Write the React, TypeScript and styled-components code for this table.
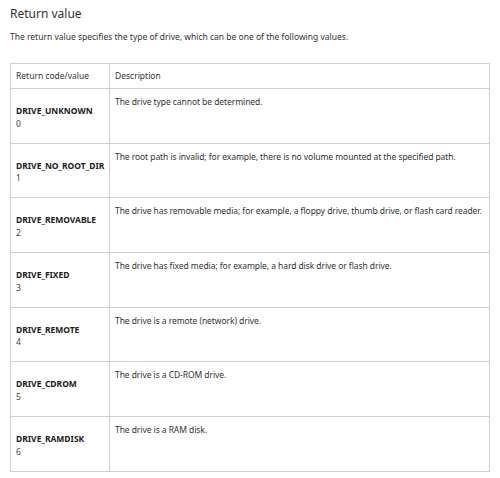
import React from "react";
import styled, { createGlobalStyle } from "styled-components";

const Global = createGlobalStyle`
  html, body { margin: 0; padding: 0; background: #fff; }
  body { font-family: "Noto Sans", "Open Sans", sans-serif; color: #333; }
`;

const Page = styled.div`
  padding: 5px 10px 0 10px;
`;

const Title = styled.h2`
  margin: 0;
  font-size: 12px;
  font-weight: 400;
  line-height: 18px;
  color: #333;
`;

const Intro = styled.p`
  margin: 8px 0 0 0;
  font-size: 8.5px;
  line-height: 12px;
  color: #333;
`;

const Table = styled.table`
  margin-top: 20px;
  width: 480px;
  border-collapse: collapse;
  table-layout: fixed;
  font-size: 8.5px;
  color: #333;
`;

const HeadCell = styled.th<{ $w?: number }>`
  box-sizing: border-box;
  ${(p) => (p.$w ? `width: ${p.$w}px;` : "")}
  border: 1px solid #d0d0d0;
  text-align: left;
  font-weight: 400;
  height: 25px;
  padding: 0 5px;
  line-height: 12px;
`;

const Row = styled.tr`
  height: 54.7px;
`;

const CodeCell = styled.td`
  box-sizing: border-box;
  border: 1px solid #d0d0d0;
  vertical-align: top;
  padding: 16px 4px 6px 5px;
  line-height: 12.7px;
  white-space: nowrap;
`;

const DescCell = styled.td`
  box-sizing: border-box;
  border: 1px solid #d0d0d0;
  vertical-align: top;
  padding: 7px 2px 6px 5px;
  line-height: 12px;
  letter-spacing: -0.07px;
  white-space: nowrap;
`;

const Name = styled.div`
  font-weight: 700;
  color: #222;
`;

const Value = styled.div`
  color: #444;
`;

const rows = [
  ["DRIVE_UNKNOWN", "0", "The drive type cannot be determined."],
  ["DRIVE_NO_ROOT_DIR", "1", "The root path is invalid; for example, there is no volume mounted at the specified path."],
  ["DRIVE_REMOVABLE", "2", "The drive has removable media; for example, a floppy drive, thumb drive, or flash card reader."],
  ["DRIVE_FIXED", "3", "The drive has fixed media; for example, a hard disk drive or flash drive."],
  ["DRIVE_REMOTE", "4", "The drive is a remote (network) drive."],
  ["DRIVE_CDROM", "5", "The drive is a CD-ROM drive."],
  ["DRIVE_RAMDISK", "6", "The drive is a RAM disk."],
];

export default function App() {
  return (
    <Page>
      <Global />
      <Title>Return value</Title>
      <Intro>The return value specifies the type of drive, which can be one of the following values.</Intro>
      <Table>
        <thead>
          <tr>
            <HeadCell $w={99}>Return code/value</HeadCell>
            <HeadCell>Description</HeadCell>
          </tr>
        </thead>
        <tbody>
          {rows.map(([n, v, d]) => (
            <Row key={n}>
              <CodeCell>
                <Name>{n}</Name>
                <Value>{v}</Value>
              </CodeCell>
              <DescCell>{d}</DescCell>
            </Row>
          ))}
        </tbody>
      </Table>
    </Page>
  );
}
